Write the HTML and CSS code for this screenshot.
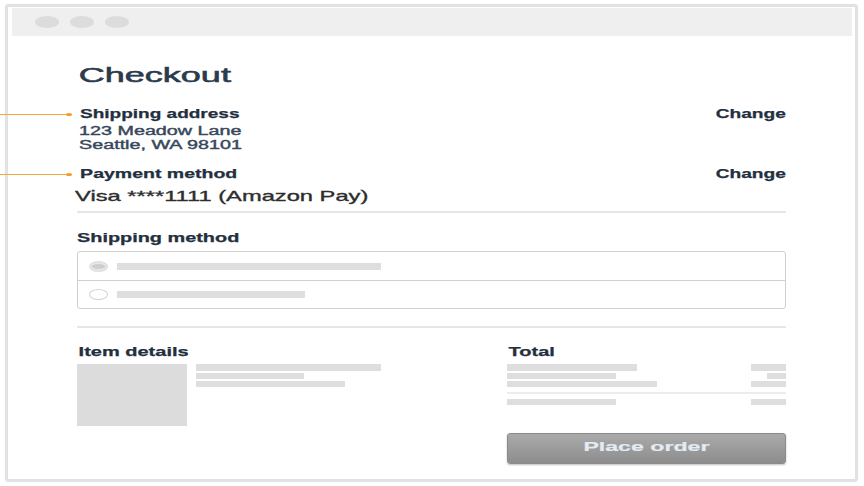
FILE: index.html
```html
<!DOCTYPE html>
<html lang="en">
<head>
    <meta charset="UTF-8">
    <meta name="viewport" content="width=device-width, initial-scale=1.0">
    <title>Checkout</title>
    <link rel="stylesheet" href="styles.css">
</head>
<body>
    <div class="window">
        <div class="titlebar">
            <span class="dot"></span>
            <span class="dot"></span>
            <span class="dot"></span>
        </div>

        <div class="checkout">
            <h1 class="title"><span class="txt">Checkout</span></h1>

            <div class="row marked first">
                <span class="label txt">Shipping address</span>
                <a class="change txt" href="#">Change</a>
            </div>
            <div class="address">
                <div><span class="txt">123 Meadow Lane</span></div>
                <div><span class="txt">Seattle, WA 98101</span></div>
            </div>

            <div class="row marked pay">
                <span class="label txt">Payment method</span>
                <a class="change txt" href="#">Change</a>
            </div>
            <div class="card"><span class="txt">Visa ****1111 (Amazon Pay)</span></div>

            <div class="divider"></div>

            <div class="section-label"><span class="label txt">Shipping method</span></div>
            <div class="options">
                <div class="option">
                    <span class="radio selected"></span>
                    <span class="bar w264"></span>
                </div>
                <div class="option">
                    <span class="radio"></span>
                    <span class="bar w188"></span>
                </div>
            </div>

            <div class="divider second"></div>

            <div class="summary">
                <div class="items">
                    <div class="head"><span class="label txt">Item details</span></div>
                    <div class="item">
                        <div class="thumb"></div>
                        <div class="lines">
                            <span class="bar w185"></span>
                            <span class="bar w108 thin"></span>
                            <span class="bar w149 thin"></span>
                        </div>
                    </div>
                </div>

                <div class="totals">
                    <div class="head"><span class="label txt">Total</span></div>
                    <div class="trow"><span class="bar w130"></span><span class="bar w35"></span></div>
                    <div class="trow thin"><span class="bar w109"></span><span class="bar w19"></span></div>
                    <div class="trow thin"><span class="bar w150"></span><span class="bar w35"></span></div>
                    <div class="rule"></div>
                    <div class="trow thin"><span class="bar w109"></span><span class="bar w35"></span></div>
                    <button class="place"><span class="txt">Place order</span></button>
                </div>
            </div>
        </div>
    </div>
</body>
</html>
```

FILE: styles.css
```css
* {
    box-sizing: border-box;
}
body {
    margin: 0;
    padding: 4px 6px 4px 5px;
    background: #fff;
    font-family: "Liberation Sans", Arial, sans-serif;
    color: #232f3e;
}
.window {
    width: 853px;
    height: 478px;
    border: 3px solid #e2e2e2;
    border-radius: 4px;
    box-shadow: 0 0 1px rgba(0, 0, 0, 0.15);
    padding: 1px 3px 0 4px;
    background: #fff;
}
.titlebar {
    height: 28px;
    background: #efefef;
    display: flex;
    align-items: center;
    gap: 11px;
    padding: 0 0 1px 23px;
}
.dot {
    width: 24px;
    height: 12px;
    border-radius: 50%;
    background: #dcdcdc;
}
.checkout {
    padding: 0 66px 0 65px;
}

/* stretched text, the shot is wider than it is tall */
.txt {
    display: inline-block;
    white-space: nowrap;
    transform-origin: left center;
}
.title {
    margin: 27px 0 0;
    font-size: 20px;
    font-weight: normal;
    line-height: 24px;
    color: #2b3a4c;
    -webkit-text-stroke: 0.55px #2b3a4c;
}
.title .txt {
    transform: scaleX(1.8);
    padding-left: 1px;
}
.label {
    font-size: 12.5px;
    font-weight: bold;
    color: #232f3e;
    transform: scaleX(1.56);
    -webkit-text-stroke: 0.25px #232f3e;
}
.row {
    display: flex;
    justify-content: space-between;
    line-height: 16px;
    position: relative;
}
.row .label {
    padding-left: 2px;
}
.first .label {
    transform: scaleX(1.52);
}
.first {
    margin-top: 19px;
}
.pay {
    margin-top: 14px;
}
.change {
    font-size: 12.5px;
    font-weight: bold;
    color: #232f3e;
    text-decoration: none;
    transform: scaleX(1.53);
    transform-origin: right center;
    -webkit-text-stroke: 0.25px #232f3e;
}
.marked::before {
    content: "";
    position: absolute;
    left: -77px;
    top: 8px;
    width: 68px;
    height: 1px;
    background: #f7a445;
}
.marked::after {
    content: "";
    position: absolute;
    left: -11px;
    top: 7px;
    width: 6px;
    height: 3px;
    border-radius: 50%;
    background: #f59a2c;
}
.address {
    margin-top: 2px;
    font-size: 12.5px;
    line-height: 14px;
    color: #37475a;
    padding-left: 2px;
    -webkit-text-stroke: 0.4px #37475a;
}
.address .txt {
    transform: scaleX(1.58);
}
.card {
    margin-top: 5px;
    font-size: 15px;
    line-height: 18px;
    color: #2d2d2d;
    -webkit-text-stroke: 0.35px #2d2d2d;
}
.card .txt {
    transform: scaleX(1.58);
    margin-left: -2px;
}
.divider {
    height: 2px;
    margin-top: 6px;
    background: #e6e6e6;
}
.divider.second {
    margin-top: 17px;
}
.section-label {
    margin-top: 16px;
    line-height: 16px;
}
.options {
    margin-top: 5px;
    border: 1px solid #cfcfcf;
    border-radius: 3px;
}
.option {
    height: 28px;
    display: flex;
    align-items: center;
    gap: 9px;
    padding-left: 11px;
}
.option + .option {
    border-top: 1px solid #cfcfcf;
    height: 28px;
}
.radio {
    width: 19px;
    height: 11px;
    border-radius: 50%;
    border: 1px solid #d2d2d2;
    background: #fff;
}
.radio.selected {
    background: #cdcdcd;
    border-color: #e2e2e2;
    box-shadow: inset 0 0 0 2px #e6e6e6;
}
.bar {
    display: block;
    height: 7px;
    background: #dedede;
}
.thin {
    height: 6px;
}
.w264 { width: 264px; }
.w188 { width: 188px; }
.w185 { width: 185px; }
.w149 { width: 149px; }
.w150 { width: 150px; }
.w130 { width: 130px; }
.w109 { width: 109px; }
.w108 { width: 108px; }
.w35 { width: 35px; }
.w19 { width: 19px; }

.summary {
    margin-top: 15px;
    display: grid;
    grid-template-columns: 430px 1fr;
}
.head {
    line-height: 16px;
}
.head .label {
    padding-left: 1px;
    transform: scaleX(1.6);
}
.section-label .label {
    transform: scaleX(1.59);
}
.item {
    margin-top: 4px;
    display: flex;
    gap: 9px;
}
.thumb {
    width: 110px;
    height: 62px;
    background: #dcdcdc;
}
.lines {
    display: flex;
    flex-direction: column;
    gap: 2px;
}
.trow {
    display: flex;
    justify-content: space-between;
    margin-top: 2px;
}
.trow .bar {
    height: inherit;
}
.head + .trow {
    margin-top: 4px;
    height: 7px;
}
.trow.thin {
    height: 6px;
}
.rule {
    height: 2px;
    margin-top: 5px;
    background: #ececec;
}
.rule + .trow {
    margin-top: 5px;
}
.place {
    display: block;
    width: 100%;
    height: 31px;
    margin-top: 28px;
    padding: 0 0 4px;
    border: 1px solid #8b8b8b;
    border-radius: 3px;
    background: linear-gradient(#aaaaaa, #8d8d8d);
    box-shadow: 0 1px 2px rgba(0, 0, 0, 0.25);
    font-family: "Liberation Sans", Arial, sans-serif;
    font-size: 13px;
    font-weight: bold;
    line-height: 22px;
    color: #e3ebf3;
    text-align: center;
    -webkit-text-stroke: 0.2px #e3ebf3;
}
.place .txt {
    transform: scaleX(1.78);
    transform-origin: center center;
}
```
